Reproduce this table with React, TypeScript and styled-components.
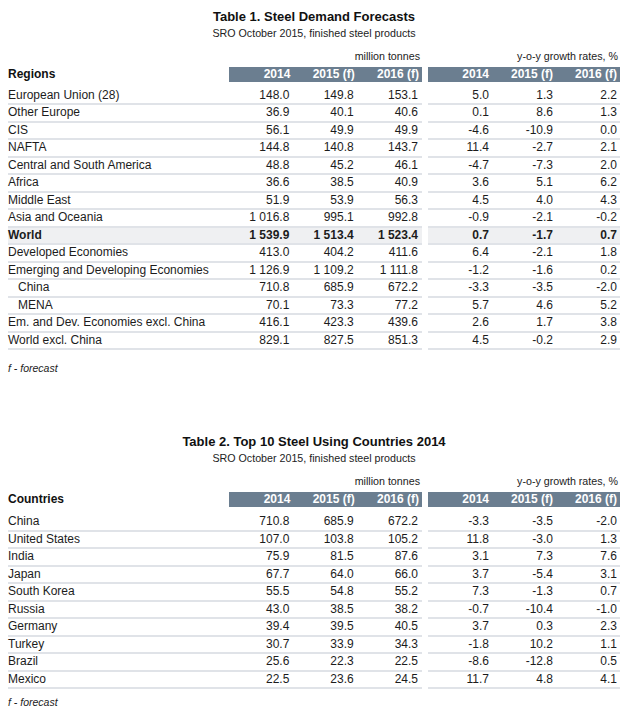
import React from 'react';
import styled, { createGlobalStyle } from 'styled-components';

const Global = createGlobalStyle`
  html, body { margin: 0; padding: 0; background: #ffffff; }
  body { font-family: "Liberation Sans", Arial, sans-serif; color: #1c1c1c; }
`;

const LABEL_W = 221;
const LEFT_W = 193;
const RIGHT_W = 192;

const Page = styled.div`
  width: 630px;
  box-sizing: border-box;
  padding: 9px 10px 0 8px;
`;

const Section = styled.section<{ $top: number }>`
  margin-top: ${p => p.$top}px;
`;

const Title = styled.h2`
  margin: 0;
  font-size: 13px;
  line-height: 16px;
  font-weight: 700;
  text-align: center;
  color: #111;
`;

const Subtitle = styled.div`
  margin-top: 1px;
  font-size: 10.7px;
  line-height: 14px;
  text-align: center;
  color: #222;
`;

const CaptionRow = styled.div<{ $top: number }>`
  display: flex;
  margin-top: ${p => p.$top}px;
  height: 13px;
  font-size: 10.7px;
  line-height: 13px;
  color: #222;
`;

const Spacer = styled.div`
  width: ${LABEL_W}px;
  flex: none;
`;

const Caption = styled.div<{ $w: number }>`
  width: ${p => p.$w}px;
  flex: none;
  box-sizing: border-box;
  padding-right: 2px;
  text-align: right;
`;

const Gap = styled.div`
  width: 6px;
  flex: none;
`;

const HeaderRow = styled.div`
  display: flex;
  margin-top: 4px;
  height: 15px;
`;

const HeaderLabel = styled.div`
  width: ${LABEL_W}px;
  flex: none;
  font-size: 12px;
  font-weight: 700;
  line-height: 15px;
  color: #111;
`;

const HeaderBlock = styled.div<{ $w: number }>`
  width: ${p => p.$w}px;
  flex: none;
  display: flex;
  background: #6b7e90;
`;

const HeaderCell = styled.div`
  flex: 1;
  box-sizing: border-box;
  padding-right: 3px;
  text-align: right;
  font-size: 12px;
  font-weight: 700;
  line-height: 15px;
  color: #ffffff;
`;

const Body = styled.div<{ $top: number }>`
  margin-top: ${p => p.$top}px;
`;

const Row = styled.div`
  display: flex;
  height: 17.5px;
`;

const Part = styled.div<{ $w: number; $hl?: boolean; $bold?: boolean }>`
  width: ${p => p.$w}px;
  flex: none;
  display: flex;
  box-sizing: border-box;
  border-bottom: 2px solid #e0e3e8;
  background: ${p => (p.$hl ? '#eff0f2' : 'transparent')};
  font-size: 12px;
  line-height: 15.5px;
  font-weight: ${p => (p.$bold ? 700 : 400)};
  color: #1c1c1c;
`;

const Label = styled.div<{ $indent?: boolean }>`
  width: ${LABEL_W}px;
  flex: none;
  box-sizing: border-box;
  padding-left: ${p => (p.$indent ? 10 : 0)}px;
  white-space: nowrap;
`;

const Num = styled.div`
  flex: 1;
  box-sizing: border-box;
  padding-right: 4px;
  text-align: right;
  white-space: nowrap;
`;

const RightNum = styled(Num)`
  padding-right: 3px;
`;

const Footnote = styled.div<{ $top: number }>`
  margin-top: ${p => p.$top}px;
  font-size: 10.5px;
  line-height: 13px;
  font-style: italic;
  color: #222;
`;

type DataRow = {
  label: string;
  v: [string, string, string];
  g: [string, string, string];
  bold?: boolean;
  indent?: boolean;
};

const table1: DataRow[] = [
  { label: 'European Union (28)', v: ['148.0', '149.8', '153.1'], g: ['5.0', '1.3', '2.2'] },
  { label: 'Other Europe', v: ['36.9', '40.1', '40.6'], g: ['0.1', '8.6', '1.3'] },
  { label: 'CIS', v: ['56.1', '49.9', '49.9'], g: ['-4.6', '-10.9', '0.0'] },
  { label: 'NAFTA', v: ['144.8', '140.8', '143.7'], g: ['11.4', '-2.7', '2.1'] },
  { label: 'Central and South America', v: ['48.8', '45.2', '46.1'], g: ['-4.7', '-7.3', '2.0'] },
  { label: 'Africa', v: ['36.6', '38.5', '40.9'], g: ['3.6', '5.1', '6.2'] },
  { label: 'Middle East', v: ['51.9', '53.9', '56.3'], g: ['4.5', '4.0', '4.3'] },
  { label: 'Asia and Oceania', v: ['1 016.8', '995.1', '992.8'], g: ['-0.9', '-2.1', '-0.2'] },
  { label: 'World', v: ['1 539.9', '1 513.4', '1 523.4'], g: ['0.7', '-1.7', '0.7'], bold: true },
  { label: 'Developed Economies', v: ['413.0', '404.2', '411.6'], g: ['6.4', '-2.1', '1.8'] },
  { label: 'Emerging and Developing Economies', v: ['1 126.9', '1 109.2', '1 111.8'], g: ['-1.2', '-1.6', '0.2'] },
  { label: 'China', v: ['710.8', '685.9', '672.2'], g: ['-3.3', '-3.5', '-2.0'], indent: true },
  { label: 'MENA', v: ['70.1', '73.3', '77.2'], g: ['5.7', '4.6', '5.2'], indent: true },
  { label: 'Em. and Dev. Economies excl. China', v: ['416.1', '423.3', '439.6'], g: ['2.6', '1.7', '3.8'] },
  { label: 'World excl. China', v: ['829.1', '827.5', '851.3'], g: ['4.5', '-0.2', '2.9'] },
];

const table2: DataRow[] = [
  { label: 'China', v: ['710.8', '685.9', '672.2'], g: ['-3.3', '-3.5', '-2.0'] },
  { label: 'United States', v: ['107.0', '103.8', '105.2'], g: ['11.8', '-3.0', '1.3'] },
  { label: 'India', v: ['75.9', '81.5', '87.6'], g: ['3.1', '7.3', '7.6'] },
  { label: 'Japan', v: ['67.7', '64.0', '66.0'], g: ['3.7', '-5.4', '3.1'] },
  { label: 'South Korea', v: ['55.5', '54.8', '55.2'], g: ['7.3', '-1.3', '0.7'] },
  { label: 'Russia', v: ['43.0', '38.5', '38.2'], g: ['-0.7', '-10.4', '-1.0'] },
  { label: 'Germany', v: ['39.4', '39.5', '40.5'], g: ['3.7', '0.3', '2.3'] },
  { label: 'Turkey', v: ['30.7', '33.9', '34.3'], g: ['-1.8', '10.2', '1.1'] },
  { label: 'Brazil', v: ['25.6', '22.3', '22.5'], g: ['-8.6', '-12.8', '0.5'] },
  { label: 'Mexico', v: ['22.5', '23.6', '24.5'], g: ['11.7', '4.8', '4.1'] },
];

const YEARS = ['2014', '2015 (f)', '2016 (f)'];

type TableProps = {
  top: number;
  title: string;
  firstCol: string;
  rows: DataRow[];
  captionTop: number;
  bodyTop: number;
  footTop: number;
};

function SteelTable({ top, title, firstCol, rows, captionTop, bodyTop, footTop }: TableProps) {
  return (
    <Section $top={top}>
      <Title>{title}</Title>
      <Subtitle>SRO October 2015, finished steel products</Subtitle>
      <CaptionRow $top={captionTop}>
        <Spacer />
        <Caption $w={LEFT_W}>million tonnes</Caption>
        <Gap />
        <Caption $w={RIGHT_W}>y-o-y growth rates, %</Caption>
      </CaptionRow>
      <HeaderRow>
        <HeaderLabel>{firstCol}</HeaderLabel>
        <HeaderBlock $w={LEFT_W}>
          {YEARS.map(y => (
            <HeaderCell key={y}>{y}</HeaderCell>
          ))}
        </HeaderBlock>
        <Gap />
        <HeaderBlock $w={RIGHT_W}>
          {YEARS.map(y => (
            <HeaderCell key={y}>{y}</HeaderCell>
          ))}
        </HeaderBlock>
      </HeaderRow>
      <Body $top={bodyTop}>
        {rows.map(r => (
          <Row key={r.label + r.v[0]}>
            <Part $w={LABEL_W + LEFT_W} $hl={r.bold} $bold={r.bold}>
              <Label $indent={r.indent}>{r.label}</Label>
              {r.v.map((x, i) => (
                <Num key={i}>{x}</Num>
              ))}
            </Part>
            <Gap />
            <Part $w={RIGHT_W} $hl={r.bold} $bold={r.bold}>
              {r.g.map((x, i) => (
                <RightNum key={i}>{x}</RightNum>
              ))}
            </Part>
          </Row>
        ))}
      </Body>
      <Footnote $top={footTop}>f - forecast</Footnote>
    </Section>
  );
}

export default function App() {
  return (
    <>
      <Global />
      <Page>
        <SteelTable
          top={0}
          title="Table 1. Steel Demand Forecasts"
          firstCol="Regions"
          rows={table1}
          captionTop={10}
          bodyTop={5.5}
          footTop={11.5}
        />
        <SteelTable
          top={59.5}
          title="Table 2. Top 10 Steel Using Countries 2014"
          firstCol="Countries"
          rows={table2}
          captionTop={10}
          bodyTop={7}
          footTop={6.5}
        />
      </Page>
    </>
  );
}
